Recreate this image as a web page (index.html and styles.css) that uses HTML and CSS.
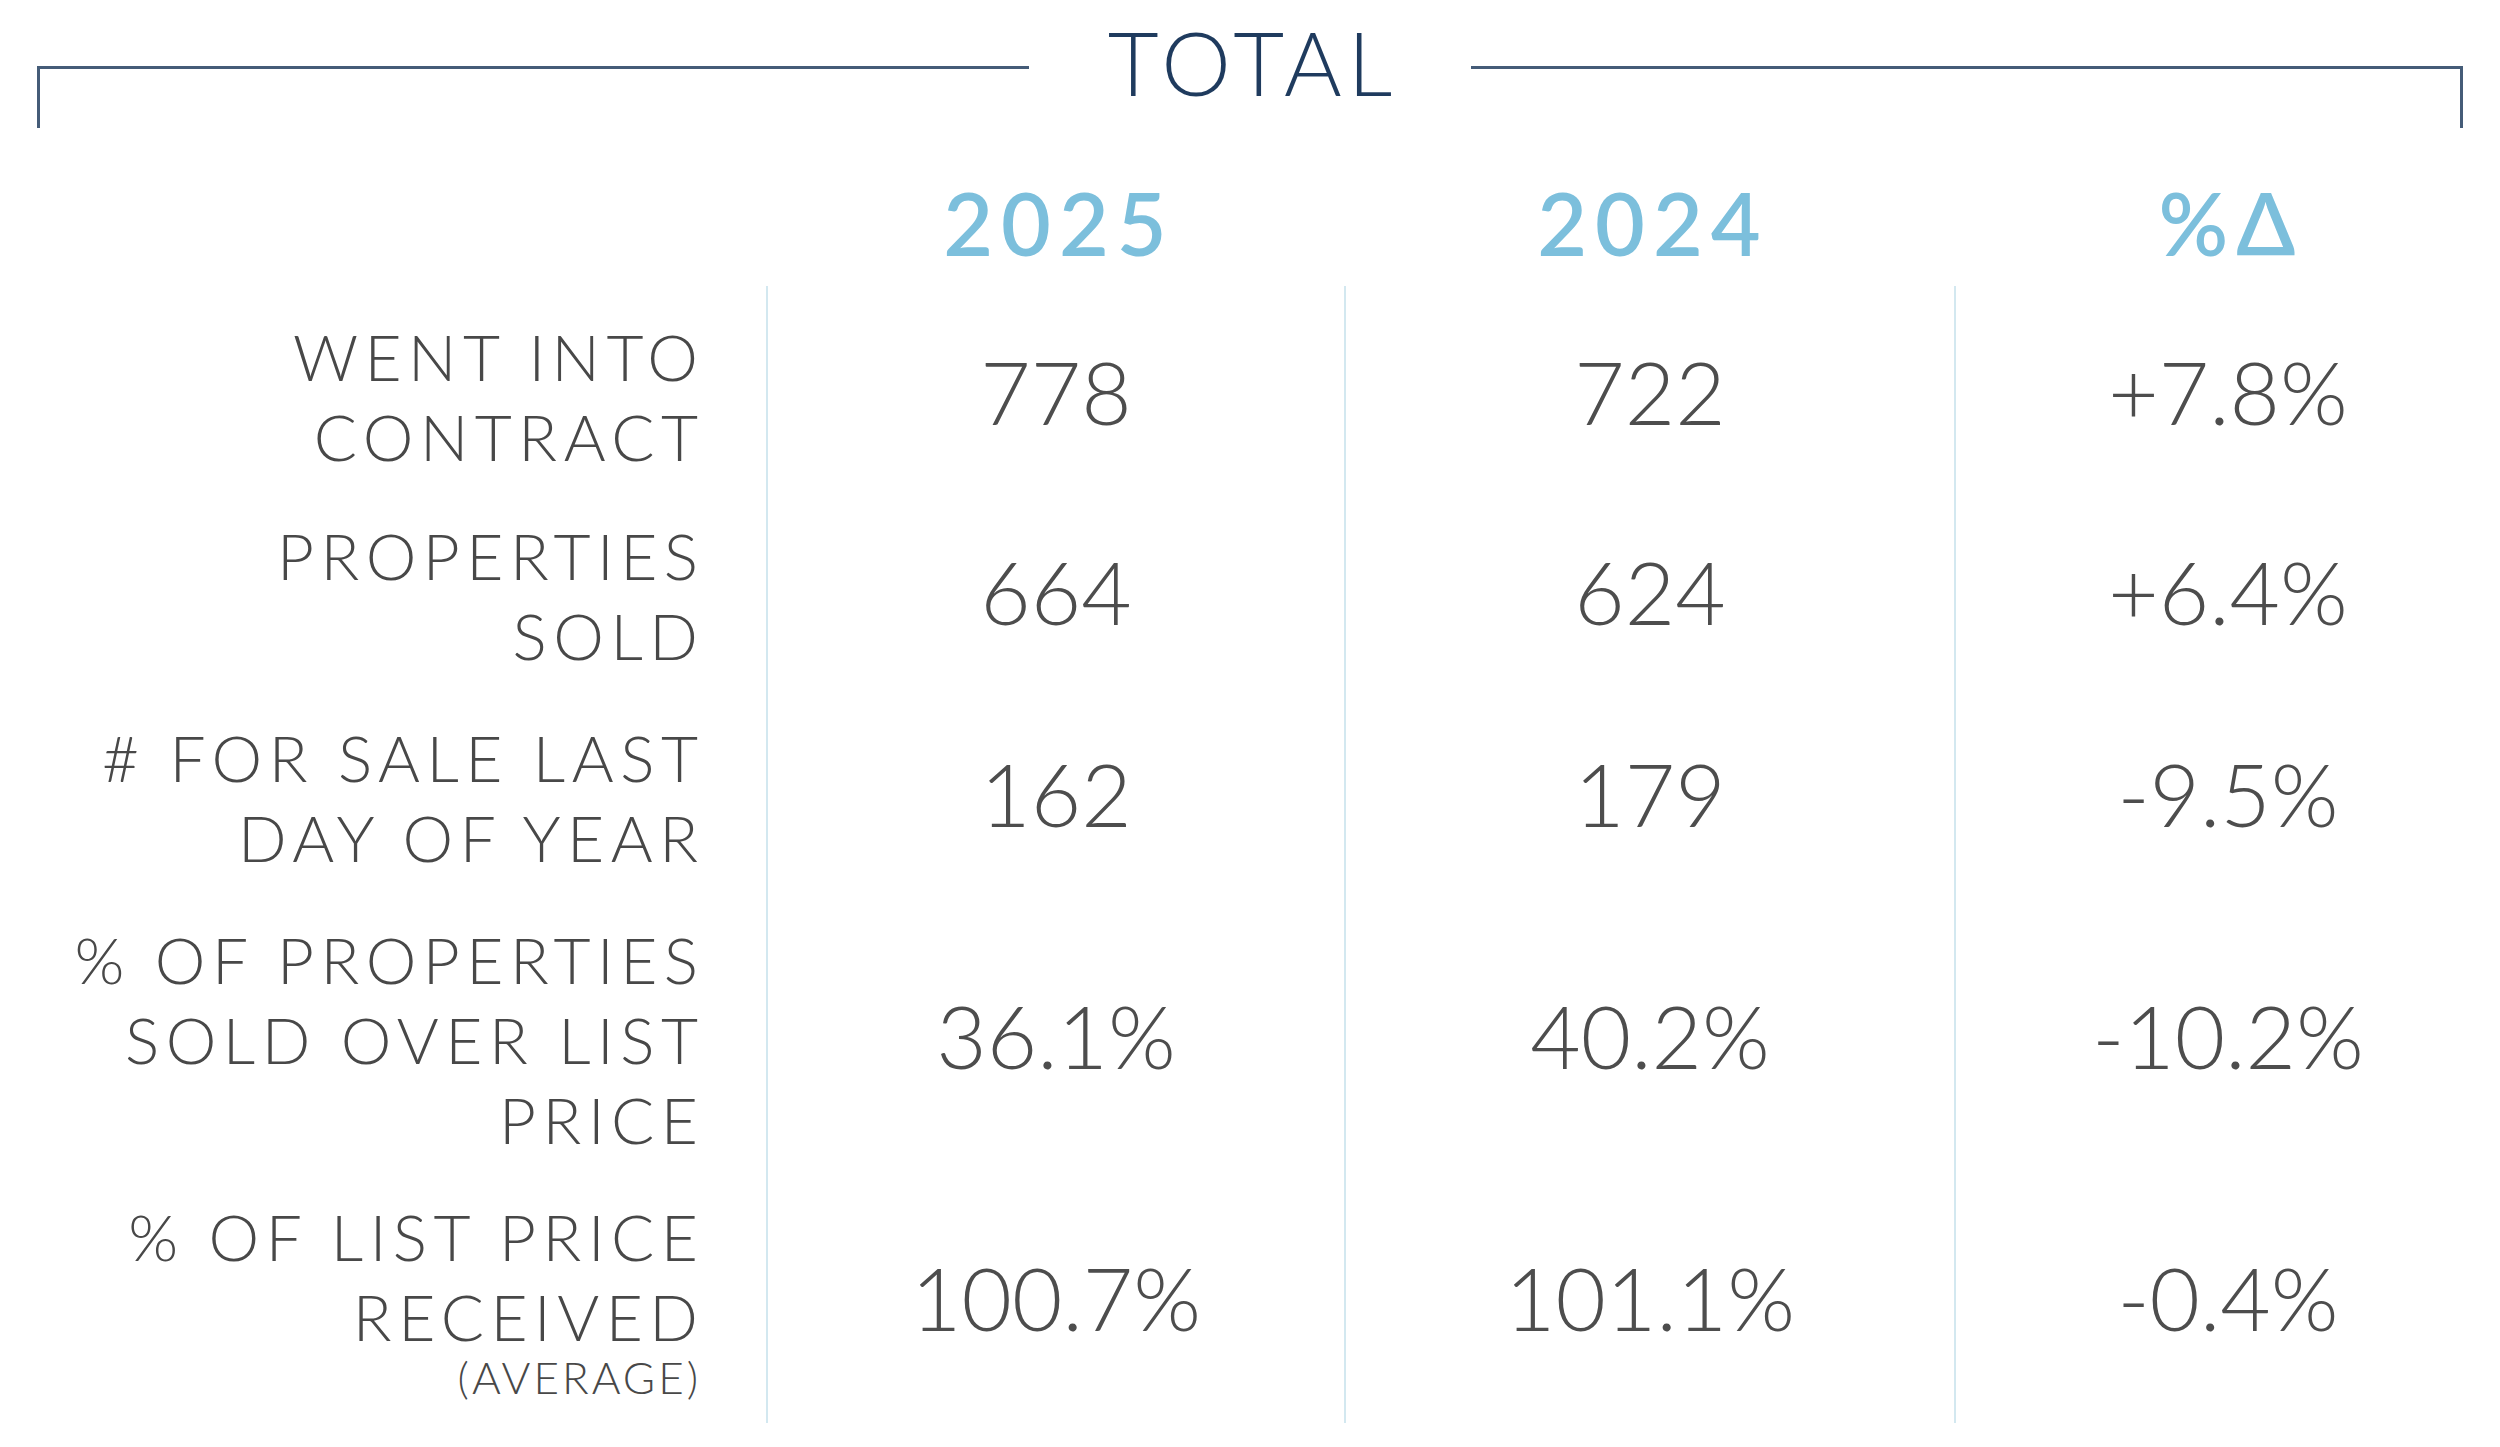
FILE: index.html
```html
<!DOCTYPE html>
<html lang="en">
<head>
<meta charset="utf-8">
<title>Total</title>
<link rel="stylesheet" href="styles.css">
</head>
<body>
<div class="report">
  <div class="title-bar">
    <div class="bracket bracket-left"></div>
    <div class="title">TOTAL</div>
    <div class="bracket bracket-right"></div>
  </div>
  <div class="table">
    <div class="head-cell"></div>
    <div class="head-cell">2025</div>
    <div class="head-cell">2024</div>
    <div class="head-cell">%Δ</div>

    <div class="label first"><span>WENT INTO</span><span>CONTRACT</span></div>
    <div class="value first">778</div>
    <div class="value first">722</div>
    <div class="value first">+7.8%</div>

    <div class="label"><span>PROPERTIES</span><span>SOLD</span></div>
    <div class="value">664</div>
    <div class="value">624</div>
    <div class="value">+6.4%</div>

    <div class="label"><span># FOR SALE LAST</span><span>DAY OF YEAR</span></div>
    <div class="value">162</div>
    <div class="value">179</div>
    <div class="value">-9.5%</div>

    <div class="label"><span>% OF PROPERTIES</span><span>SOLD OVER LIST</span><span>PRICE</span></div>
    <div class="value">36.1%</div>
    <div class="value">40.2%</div>
    <div class="value">-10.2%</div>

    <div class="label last"><span>% OF LIST PRICE</span><span>RECEIVED</span><span class="small">(AVERAGE)</span></div>
    <div class="value">100.7%</div>
    <div class="value">101.1%</div>
    <div class="value">-0.4%</div>
  </div>
</div>
</body>
</html>
```

FILE: styles.css
```css
html, body {
  margin: 0;
  padding: 0;
  background: #ffffff;
}

body {
  font-family: Lato, "Open Sans", "DejaVu Sans", sans-serif;
}

.report {
  width: 2500px;
}

.title-bar {
  display: flex;
  height: 128px;
  padding: 0 37px;
  box-sizing: border-box;
}

.bracket {
  flex: 1;
  margin-top: 66px;
  border-top: 3px solid #455c78;
}

.bracket-left {
  border-left: 3px solid #455c78;
}

.bracket-right {
  border-right: 3px solid #455c78;
}

.title {
  margin-top: 18px;
  padding: 0 73px 0 79px;
  font-size: 88px;
  line-height: 88px;
  height: 88px;
  font-weight: 300;
  letter-spacing: 6px;
  color: #1f3b5e;
}

.table {
  display: grid;
  grid-template-columns: 766px 578px 610px 1fr;
}

.head-cell {
  padding: 52px 0 20px 8px;
  font-size: 86px;
  line-height: 86px;
  height: 86px;
  font-weight: 600;
  letter-spacing: 8px;
  color: #7cbfdc;
  text-align: center;
}

.label {
  display: flex;
  flex-direction: column;
  align-items: flex-end;
  padding: 21px 68px 21px 0;
  font-size: 64px;
  line-height: 80px;
  font-weight: 300;
  letter-spacing: 6.5px;
  color: #484848;
}

.label span {
  margin-right: -6.5px;
  white-space: nowrap;
}

.label.first {
  padding-top: 31px;
  padding-bottom: 18px;
}

.label.last {
  padding-top: 16px;
  padding-bottom: 26px;
}

.label .small {
  font-size: 44px;
  line-height: 40px;
  letter-spacing: 3px;
  margin-right: -3px;
}

.value {
  display: flex;
  align-items: center;
  justify-content: center;
  padding-bottom: 10px;
  border-left: 2px solid #d3e8f0;
  font-size: 87px;
  font-weight: 300;
  color: #4d4d4d;
}

.value.first {
  padding-top: 12px;
}
```
